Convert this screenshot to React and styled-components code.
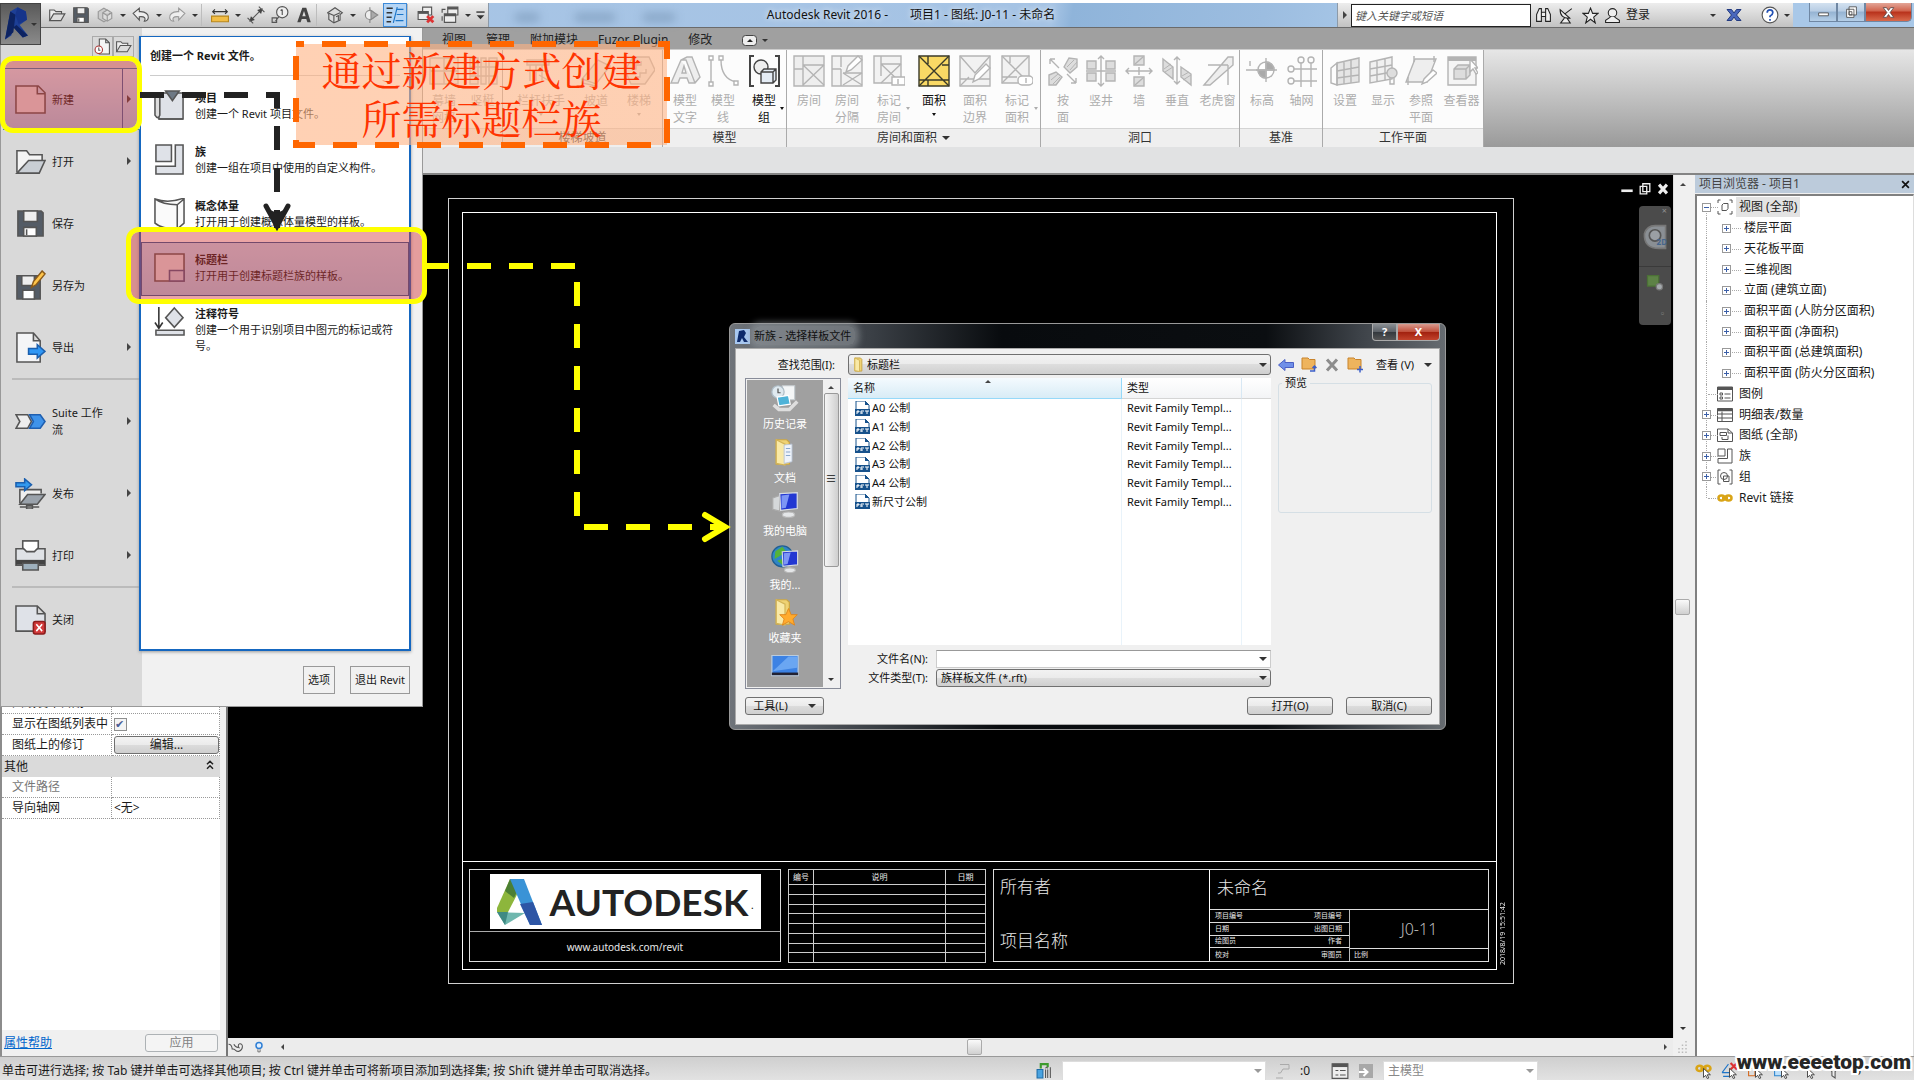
import styled, { createGlobalStyle, css } from "styled-components";

const GlobalStyle = createGlobalStyle`
*{box-sizing:border-box;}
body{margin:0;background:#fff;color:#1a1a1a;
font:12px/16px "Noto Sans","Noto Sans CJK SC",sans-serif;}
button,input,select{font:inherit;color:inherit;margin:0;}
button{padding:0;border:0;background:none;}
svg{display:block;flex:none;}
`;

/* ---------- shell ---------- */

const Shell = styled.div`
position:relative;height:100vh;padding:3px 6px 0 0;overflow:hidden;
display:flex;flex-direction:column;`;

const TitleBar = styled.header`
display:flex;height:25px;flex:none;border-bottom:1px solid #6b6b6b;
background:linear-gradient(100deg,#a9c6e6 0%,#a5c3e4 55%,#8fb4da 56%,#9cbde0 66%,#a9c8e8 72%);`;

const QuickBar = styled.div`
display:flex;align-items:center;padding-left:45px;width:489px;flex:none;
background:linear-gradient(#f0f0f0,#c4c4c4);border-right:1px solid #8d9aa8;`;

const QuickButton = styled.button`
display:flex;align-items:center;justify-content:center;height:24px;
width:${p => p.$slim ? 12 : 24}px;
${p => p.$on && css`background:#b5d5f5;border:1px solid #3c8ad8;`}`;

const QuickSeparator = styled.i`width:7px;height:22px;border-left:1px solid #bdbdbd;`;

const WindowTitle = styled.div`
flex:1;display:flex;align-items:center;justify-content:center;gap:22px;position:relative;
padding-right:4px;white-space:nowrap;color:#111;text-shadow:0 0 6px #fff;`;

const Haze = styled.i`
position:absolute;top:10px;left:${p => p.$left}px;width:${p => p.$width}px;height:9px;
background:#6a88a8;opacity:.5;filter:blur(5px);`;

const InfoCenter = styled.div`
display:flex;align-items:center;width:456px;flex:none;
background:linear-gradient(#ededed,#c2c2c2);border-left:1px solid #8d9aa8;`;

const SearchBox = styled.input`
width:180px;height:23px;border:1px solid #222;background:#fff;padding:0 3px;font-size:11px;font-style:italic;
&::placeholder{color:#555;opacity:1;}`;

const InfoButton = styled.button`
width:${p => p.$width || 24}px;height:23px;display:flex;align-items:center;gap:5px;white-space:nowrap;
justify-content:${p => p.$align || "center"};padding:0 2px;`;

const WindowButtons = styled.div`display:flex;padding:0 2px 0 16px;width:121px;flex:none;align-items:flex-start;`;

const WindowButton = styled.button`
height:19px;width:${p => p.$close ? 47 : 28}px;display:flex;align-items:center;justify-content:center;
border:1px solid #6f87a3;border-top:0;border-radius:0 0 ${p => p.$close ? "5px 0" : "0 0"};
background:${p => p.$close ? "linear-gradient(#e3a597,#d0624b 45%,#b8311b 50%,#d96a4c)" : "linear-gradient(#d3e1f0,#b8cde4 45%,#95b3d2 50%,#b5cfe8)"};`;

const AppButton = styled.button`
position:absolute;left:0;top:3px;width:41px;height:42px;z-index:4;display:flex;align-items:center;gap:2px;
padding-left:3px;border:1px solid #444;background:linear-gradient(#5a5a5a,#8a8a8a);`;

const Tabs = styled.nav`
display:flex;align-items:center;gap:20px;height:21px;flex:none;padding:3px 0 0 442px;background:#a0a0a0;`;

const Tab = styled.button`color:#222;white-space:nowrap;`;

const TabToggle = styled.button`display:flex;align-items:center;gap:5px;margin-left:10px;`;

const Ribbon = styled.div`
display:flex;height:98px;flex:none;padding-left:422px;
border-top:1px solid #ccc;background:linear-gradient(#e6e6e6,#9a9a9a);`;

const RibbonPanel = styled.section`
display:flex;flex-direction:column;flex:none;background:#fcfcfc;border-right:1px solid #aaa;`;

const RibbonButtons = styled.div`display:flex;flex:1;padding:5px 0 0 3px;`;

const RibbonButton = styled.button`
position:relative;display:flex;flex-direction:column;align-items:center;width:${p => p.$width}px;
line-height:17px;white-space:pre;color:${p => p.$on ? "#111" : "#adadad"};
svg{margin-bottom:5px;}`;

const ButtonArrow = styled.i`
${p => p.$side ? css`position:absolute;right:2px;top:52px;` : css`margin-top:4px;`}
border:2px solid transparent;border-top:3px solid currentColor;border-bottom:0;`;

const PanelLabel = styled.div`
height:19px;line-height:18px;background:#efefef;border-top:1px solid #d4d4d4;color:#333;white-space:nowrap;
display:flex;align-items:center;justify-content:center;gap:5px;`;

const OptionsBar = styled.div`height:28px;flex:none;background:#e1e2e3;border-bottom:2px solid #848484;`;

const Workspace = styled.main`display:flex;flex:1;min-height:0;background:#f0f0f0;`;

/* ---------- properties ---------- */

const Properties = styled.aside`
width:220px;flex:none;display:flex;flex-direction:column;border-left:2px solid #8c8c8c;background:#fff;margin-right:6px;`;

const TypeSelector = styled.div`height:518px;flex:none;background:#f0f0f0;`;

const PropertyTable = styled.table`
border-collapse:separate;border-spacing:0;table-layout:fixed;width:100%;
td,th{height:21px;padding:0 0 0 3px;font-weight:400;text-align:left;border-bottom:1px dotted #999;border-right:1px dotted #999;white-space:nowrap;}
th:first-child{padding-left:10px;width:110px;}
td{padding-left:2px;}
tr.muted{color:#777;}
tr.group th{padding-left:2px;background:#dadada;border:0;}
label{cursor:default;}`;

const GroupRow = styled.div`display:flex;justify-content:space-between;padding-right:4px;`;

const Tick = styled.input`
appearance:none;display:block;width:13px;height:13px;border:1px solid #8e8f8f;background:#f4f4f4;
&:checked::after{content:"✔";display:block;font:bold 11px/11px "DejaVu Sans",sans-serif;color:#4a5f97;}`;

const RaisedButton = styled.button`
display:flex;align-items:center;justify-content:center;
height:18px;width:${p => p.$width ? p.$width + "px" : "100%"};
border:1px solid #707070;border-radius:3px;background:linear-gradient(#f4f4f4,#ebebeb 48%,#dcdcdc 50%,#cfcfcf);
&:disabled{color:#838383;background:#f4f4f4;border-color:#adb2b5;}`;

const PropertiesFooter = styled.footer`
margin-top:auto;height:26px;display:flex;align-items:center;justify-content:space-between;padding:0 2px;background:#f0f0f0;
a{color:#0066cc;}`;

/* ---------- drawing area ---------- */

const View = styled.section`
flex:1;min-width:0;display:grid;grid-template:minmax(0,1fr) 18px / minmax(0,1fr) 18px;border-left:2px solid #777;`;

const Canvas = styled.div`
position:relative;background:#000;padding:23px 159px 54px 220px;display:flex;`;

const Sheet = styled.div`flex:1;display:flex;border:1px solid #d0d0d0;padding:13px 0 13px 13px;color:#e8e8e8;`;

const SheetFrame = styled.div`flex:1;display:flex;flex-direction:column;border:1px solid #fff;min-width:0;`;

const TitleBlock = styled.div`
margin-top:auto;height:108px;border-top:1px solid #fff;padding:7px 7px 7px 6px;display:flex;gap:7px;`;

const LogoCell = styled.div`width:312px;flex:none;border:1px solid #ddd;display:flex;flex-direction:column;align-items:center;`;

const LogoPlate = styled.div`
width:271px;height:55px;margin-top:4px;background:#fff;color:#222;display:flex;align-items:center;gap:8px;padding-left:7px;
font:bold 37px/46px Lato,sans-serif;small{font-size:9px;align-self:flex-end;margin-left:-5px;}`;

const LogoLink = styled.div`align-self:stretch;flex:1;margin-top:2px;border-top:1px solid #aaa;display:flex;align-items:center;justify-content:center;font-size:10px;`;

const RevisionTable = styled.table`
width:198px;height:94px;flex:none;border-collapse:collapse;font-size:8px;line-height:8px;
td,th{border:1px solid #ccc;padding:0;font-weight:400;}`;

const InfoCell = styled.div`flex:1;display:flex;border:1px solid #ddd;`;

const OwnerCell = styled.div`
width:216px;flex:none;border-right:1px solid #fff;padding:5px 6px 8px;display:flex;flex-direction:column;justify-content:space-between;
font-size:17px;line-height:24px;font-weight:300;`;

const SheetInfo = styled.div`flex:1;display:flex;flex-direction:column;`;

const SheetName = styled.div`height:41px;padding:6px 7px;font-size:17px;line-height:24px;font-weight:300;border-bottom:1px solid #ddd;`;

const SheetMeta = styled.div`flex:1;display:grid;grid-template-columns:140px 1fr;grid-template-rows:39px 1fr;`;

const MetaList = styled.dl`
grid-row:1 / 3;margin:0;border-right:1px solid #bbb;display:grid;grid-template-rows:repeat(4,1fr);font-size:7px;line-height:8px;
div{display:flex;justify-content:space-between;align-items:center;padding:0 7px 0 5px;border-bottom:1px solid #ddd;}
div:last-child{border-bottom:0;}
dd{margin:0;}`;

const SheetNumber = styled.div`display:flex;align-items:center;justify-content:center;font-size:16px;font-weight:300;border-bottom:1px solid #ddd;color:#bbb;`;

const ScaleCell = styled.div`font-size:7px;line-height:12px;padding-left:4px;`;

const PlotStamp = styled.div`
width:16px;flex:none;writing-mode:vertical-rl;transform:rotate(180deg);font-size:7px;line-height:12px;
padding:0 0 0 4px;margin-bottom:5px;text-align:left;white-space:nowrap;`;

const MdiButtons = styled.div`position:absolute;right:3px;top:7px;display:flex;gap:4px;`;

const NavBar = styled.div`
position:absolute;right:2px;top:31px;width:32px;height:119px;border-radius:4px;background:#4b4b4b;
display:flex;flex-direction:column;align-items:center;color:#8f8f8f;`;

const NavIcon = styled.button`
position:relative;height:50px;width:100%;padding-top:8px;display:flex;justify-content:center;
&+&{border-top:1px solid #3a3a3a;padding-top:6px;height:37px;}
small{position:absolute;right:4px;top:21px;font-size:8px;line-height:10px;font-weight:bold;color:#45658c;}`;

const NavMark = styled.span`align-self:flex-end;padding:0 4px;font-size:9px;line-height:${p => p.$tall ? 22 : 10}px;`;

const ScrollV = styled.div`
display:flex;flex-direction:column;align-items:center;justify-content:space-between;padding:8px 0;background:#f0f0f0;border-left:1px solid #e0e0e0;`;

const ScrollH = styled.div`
display:flex;align-items:center;justify-content:space-between;padding:0 6px 0 0;background:#ececec;`;

const ViewControls = styled.div`display:flex;align-items:center;gap:8px;i{margin-left:8px;}`;

const Thumb = styled.i`width:15px;height:16px;border:1px solid #aaa;border-radius:2px;background:linear-gradient(#fafafa,#d0d0d0);`;

const Caret = styled.i`
flex:none;border:${p => p.$size || 4}px solid transparent;
${p => p.$dir === "up" && css`border-bottom-color:#444;border-top-width:0;`}
${p => p.$dir === "left" && css`border-right-color:#444;border-left-width:0;`}
${p => p.$dir === "right" && css`border-left-color:#444;border-right-width:0;`}
${p => !p.$dir && css`border-top-color:#333;border-bottom-width:0;`}`;

/* ---------- project browser ---------- */

const Browser = styled.aside`width:219px;margin-left:4px;flex:none;display:flex;flex-direction:column;`;

const BrowserTitle = styled.div`
height:18px;display:flex;align-items:center;justify-content:space-between;padding:0 4px;margin-bottom:1px;background:#bccbdb;color:#444;`;

const Tree = styled.div`
flex:1;border:1px solid #808080;border-width:2px 1px 0 2px;background:#fff;border-right-color:#ddd;`;

const TreeRows = styled.ul`list-style:none;margin:0;padding:1px 0 0 3px;height:312px;display:grid;grid-auto-rows:1fr;`;

const TreeRow = styled.li`
position:relative;display:flex;align-items:center;padding-left:${p => p.$child ? 22 : 2}px;white-space:nowrap;
&::before{content:"";position:absolute;left:6px;top:${p => p.$first ? 50 : 0}%;bottom:${p => p.$last ? 50 : 0}%;border-left:1px dotted #aaa;}
&::after{content:"";position:absolute;top:50%;left:${p => p.$child ? 32 : 8}px;width:${p => p.$child ? 9 : 10}px;border-top:1px dotted #aaa;}`;

const Expander = styled.button`
position:relative;z-index:1;width:9px;height:9px;border:1px solid #999;background:#fff;display:grid;place-items:center;
margin-right:${p => p.$child ? 10 : 6}px;visibility:${p => p.$empty ? "hidden" : "visible"};`;

const TreeLabel = styled.span`padding:0 3px;margin-left:${p => p.$child ? 0 : 3}px;line-height:20px;background:${p => p.$on ? "#e3e3e3" : "none"};`;

/* ---------- status bar ---------- */

const StatusBar = styled.footer`
display:flex;align-items:center;height:24px;flex:none;padding:4px 0 0 2px;
border-top:1px solid #999;background:linear-gradient(#cfcfcf,#e2e2e2);white-space:nowrap;`;

const StatusText = styled.span`flex:1;`;
const StatusTools = styled.div`display:flex;align-items:center;gap:9px;width:659px;`;
const FilterCount = styled.span`margin-right:12px;`;
const SelectTools = styled.div`display:flex;align-items:center;gap:9px;width:219px;`;

const PickWrap = styled.span`
position:relative;display:block;width:${p => p.$width ? p.$width + "px" : "100%"};
>i{position:absolute;right:4px;top:50%;margin-top:-2px;pointer-events:none;
${p => p.$muted && css`border-top-color:#999;`}}`;

const Pick = styled.select`
appearance:none;display:block;width:100%;height:${p => p.$height || 20}px;border-radius:0;padding:0 4px;
border:1px solid ${p => p.$plain ? "#ddd" : "#707070"};color:${p => p.$plain ? "#888" : "#111"};
background:${p => p.$plain ? "#fff" : "linear-gradient(#f2f2f2,#ebebeb 48%,#dddddd 50%,#cfcfcf)"};
${p => !p.$plain && css`border-radius:3px;`}
${p => p.$inset && css`padding-left:${p.$inset}px;`}`;

const Watermark = styled.div`
position:absolute;right:9px;bottom:6px;z-index:6;color:#262626;
font:900 21px/24px Roboto,"Liberation Sans",sans-serif;
text-shadow:2px 0 #fff,-2px 0 #fff,0 2px #fff,0 -2px #fff,2px 2px #fff,-2px -2px #fff,2px -2px #fff,-2px 2px #fff;`;

/* ---------- application menu ---------- */

const AppMenu = styled.div`
position:absolute;left:0;top:28px;z-index:3;width:423px;height:679px;display:flex;font-size:11px;
background:#f1f1f1;border:1px solid #999;border-top:0;`;

const MenuLeft = styled.div`width:141px;flex:none;background:#d9d9d9;display:flex;flex-direction:column;`;

const RecentButtons = styled.div`
display:flex;justify-content:flex-end;height:33px;padding:8px 8px 4px;margin-bottom:7px;
button{width:21px;border:1px solid #aaa;display:grid;place-items:center;}`;

const MenuItem = styled.button`
position:relative;display:flex;align-items:center;height:${p => p.$tall ? 82 : 62}px;padding:0 11px 0 14px;gap:6px;text-align:left;
${p => p.$on && css`margin:0 2px;padding:0 9px 0 12px;border:1px solid #3c7fb5;border-width:1px 0;background:linear-gradient(#d6e8f8,#a8cdec);
&::after{content:"";position:absolute;right:17px;top:0;bottom:0;border-left:1px solid #3c66a5;}`}
span{flex:1;white-space:pre;line-height:17px;}`;

const MenuRule = styled.hr`width:127px;height:2px;margin:0 0 0 11px;border:0;background:#bbb;flex:none;`;

const MenuRight = styled.div`flex:1;display:flex;flex-direction:column;padding:8px 11px 12px 0;margin-left:-3px;`;

const NewPanel = styled.div`
height:616px;background:#fff;border:1px solid #1567c0;border-width:1px 2px 2px;box-shadow:0 1px 3px #999;
h2{margin:0 9px;padding:10px 0;font-size:11px;line-height:18px;border-bottom:1px solid #ccc;}`;

const NewItem = styled.button`
display:flex;width:100%;height:54px;padding:${p => p.$on ? 9 : 10}px 6px 0 ${p => p.$on ? 12 : 13}px;gap:10px;text-align:left;
${p => p.$on && css`border:1px solid #2a5c9a;background:linear-gradient(#c5ddf4,#aecdea);`}
p{margin:0;line-height:16px;}
b{display:block;line-height:16px;}`;

const NewItems = styled.div`padding-top:4px;`;

const MenuFooter = styled.div`
display:flex;justify-content:flex-end;gap:15px;margin:15px 1px 0 0;
button{height:28px;padding:0 4px;border:1px solid #999;background:#f1f1f1;font-size:11px;}`;

/* ---------- annotations drawn over the windows ---------- */

const Highlight = styled.div`
position:absolute;z-index:5;left:${p => p.$x}px;top:${p => p.$y}px;width:${p => p.$w}px;height:${p => p.$h}px;
border:5px solid #ff0;border-radius:13px;background:rgba(212,50,50,.44);background-clip:padding-box;pointer-events:none;`;

const Arrows = styled.svg`position:absolute;left:0;top:0;z-index:5;pointer-events:none;`;

const Callout = styled.div`
position:absolute;z-index:5;left:293px;top:41px;width:377px;height:107px;padding:4px 0;text-align:center;
color:#ff3300;font:400 40px/48px "Noto Serif CJK SC","Noto Sans CJK SC",serif;
background:linear-gradient(rgba(255,178,130,.6),rgba(255,178,130,.6)) 3px 3px / 371px 101px no-repeat;
svg{position:absolute;left:0;top:0;}`;

/* ---------- file dialog ---------- */

const Dialog = styled.section`
position:absolute;z-index:2;left:729px;top:323px;width:717px;display:flex;flex-direction:column;padding:0 5px 4px;
border:1px solid #999;border-radius:6px;font-size:11px;color:#111;
background:linear-gradient(90deg,#6f747a,#3a3f45 20%,#080b0e 38%,#0b0e11 75%,#3d4248 88%,#666b70);`;

const DialogTitle = styled.div`
display:flex;align-items:center;height:24px;gap:4px;
strong{flex:1;font-weight:400;}
strong span{padding:2px 4px 2px 0;border-radius:6px;background:rgba(150,154,160,.55);box-shadow:0 0 6px 4px rgba(150,154,160,.55);}`;

const DialogButtons = styled.div`display:flex;align-self:flex-start;`;

const DialogButton = styled.button`
height:17px;width:${p => p.$close ? 43 : 25}px;border:1px solid #aaa;border-top:0;color:#fff;font-weight:bold;line-height:14px;
border-radius:${p => p.$close ? "0 0 4px 0" : "0 0 0 4px"};
background:${p => p.$close ? "linear-gradient(#d99a8e,#c0503c 48%,#a1200e 50%,#c2432c)" : "linear-gradient(#8a8f94,#5c6167 48%,#33383d 50%,#555)"};`;

const DialogBody = styled.div`
display:grid;grid-template-columns:96px 423px 1fr;column-gap:7px;row-gap:3px;padding:5px 8px 9px 9px;
border:1px solid #aaa;background:#f0f0f0;`;

const LookLabel = styled.label`align-self:center;text-align:right;padding-right:6px;white-space:nowrap;`;

const FolderPick = styled.div`position:relative;svg{position:absolute;left:4px;top:3px;z-index:1;}`;

const DialogTools = styled.div`
display:flex;align-items:center;gap:7px;
button{display:flex;align-items:center;gap:10px;white-space:nowrap;}
button:last-child{margin-left:6px;}`;

const Places = styled.div`display:flex;height:311px;border:1px solid #888c99;padding:1px;background:#f0f0f0;`;

const PlaceList = styled.div`flex:1;background:#a0a0a0;overflow:hidden;padding-top:2px;`;

const Place = styled.button`
display:flex;flex-direction:column;align-items:center;width:100%;height:54px;padding-top:2px;gap:4px;color:#fff;
&:nth-child(even){height:53px;}`;

const PlaceScroll = styled.div`
width:16px;display:flex;flex-direction:column;align-items:center;justify-content:space-between;padding:6px 0;
&::before{content:"≡";order:1;height:172px;width:13px;border:1px solid #999;border-radius:2px;text-align:center;line-height:170px;
background:linear-gradient(90deg,#f5f5f5,#cfcfcf);margin-bottom:108px;}
i:last-child{order:2;}`;

const FilePane = styled.div`display:flex;flex-direction:column;`;

const FileTable = styled.table`
width:100%;border-collapse:separate;border-spacing:0;background:#fff;height:133px;
th{height:21px;padding:0 5px;text-align:left;font-weight:400;border-right:1px solid #d8e8f4;border-bottom:1px solid #d5d5d5;background:linear-gradient(#fff,#f3f4f6);}
th:first-child{width:274px;background:linear-gradient(#f4fafe,#d8ecf6);border-color:#96d9f9;position:relative;}
th:nth-child(2){width:120px;}
td{padding:0 5px;border-right:1px solid #e9f3fa;}
td:first-child{padding-left:7px;}
th:last-child,td:last-child{border-right:0;}
th i{position:absolute;left:50%;top:2px;}`;

const FileFill = styled.div`
height:134px;background:#fff;display:grid;grid-template-columns:274px 120px 1fr;
i{border-right:1px solid #e9f3fa;}`;

const FileName = styled.span`display:flex;align-items:center;gap:2px;line-height:18px;`;

const FieldRow = styled.div`
display:grid;grid-template-columns:88px 1fr;align-items:center;margin-top:${p => p.$first ? 5 : 1}px;
label{text-align:right;padding-right:8px;}`;

const NameInput = styled.input`display:block;width:100%;height:18px;border:1px solid #ccc;background:#fff;border-top-color:#999;padding:0 4px;`;

const Preview = styled.fieldset`
margin:-3px 0 0;height:138px;border:1px solid #d5dfe5;border-radius:3px;padding:0;
legend{margin-left:3px;padding:0 3px;line-height:16px;}`;

const DialogFooter = styled.div`grid-column:1 / 4;display:flex;gap:13px;padding-top:5px;button:first-child{margin-right:auto;}`;

const ToolsGap = styled.i`width:20px;`;

/* ---------- icons ---------- */

const Icon = ({ size = 16, children, ...rest }) => (
  <svg width={size} height={size} viewBox="0 0 32 32" fill="none" stroke="#555" strokeWidth="2" {...rest}>{children}</svg>
);

const quickIcons = {
  open: <><path d="M3 26V7h8l3 3h10v5" fill="#eee" /><path d="M3 26l7-12h20l-7 12z" fill="#ddd" /></>,
  save: <><path d="M3 3h24l2 2v24H3z" fill="#545c66" /><path d="M9 3h14v11H9z" fill="#eee" /><path d="M9 20h13v9H9z" fill="#fff" /><path d="M12 22v6" /></>,
  sync: <><path d="M4 10l10-6 10 6v12l-10 6-10-6z" stroke="#999" fill="#ccc" /><path d="M12 12l8-5 8 5v10l-8 5-8-5zM12 12l8 5 8-5M20 17v10" stroke="#999" fill="#ddd" /></>,
  undo: <path d="M2 13L13 4v6c12-1 17 6 16 11-1 4-4 6-7 6 3-5 1-9-9-8v6z" fill="#eee" />,
  redo: <path d="M30 13L19 4v6C7 9 2 16 3 21c1 4 4 6 7 6-3-5-1-9 9-8v6z" fill="#eee" stroke="#999" />,
  dim: <><path d="M3 10h26M7 6l-4 4 4 4M25 6l4 4-4 4" stroke="#333" /><path d="M1 18h30v10H1z" fill="#f2bd45" stroke="#b8871c" /></>,
  measure: <><path d="M6 26L26 6" /><path d="M28 4l-3 10-7-7zM4 28l3-10 7 7z" fill="#444" stroke="none" /><path d="M1 21l10 10M21 1l10 10" /></>,
  tag: <><circle cx="20" cy="11" r="10" fill="#eee" /><path d="M20 6v10M17 8l3-2M14 19L8 27M2 21h8v8H2z" /></>,
  text: <path d="M4 29L13 3h7l8 26h-6l-2-6h-8l-2 6zM13 18h6l-3-9z" fill="#444" stroke="none" fillRule="evenodd" />,
  house: <><path d="M3 12l13-9 13 9-4 3v10l-11 5-9-6V15z" fill="#ddd" /><path d="M14 17l11-5M14 17v13M5 13l9 4M18 19l4-2v8" /></>,
  section: <><circle cx="14" cy="16" r="8" fill="#eee" stroke="#888" /><path d="M14 8V2M14 30v-6M16 8l12 8-12 8z" stroke="#888" fill="#aaa" /></>,
  thin: <><path d="M1 4h11M1 12h10M1 20h9M1 28h8" stroke="#333" strokeWidth="3" /><path d="M20 2l-7 28M20 6h11M19 15h12M17 26h14" stroke="#1b75c8" /></>,
  closeWin: <><path d="M10 2h16v14H10z" fill="#eee" /><path d="M2 10h18v14H2z" fill="#eee" /><path d="M2 12h18" strokeWidth="4" /><path d="M18 18l11 11M29 18L18 29" stroke="#d33" strokeWidth="5" /></>,
  switchWin: <><path d="M12 2h18v14H12zM6 14h20v15H6z" fill="#eee" /><path d="M12 4h18M6 16h20" strokeWidth="4" /><path d="M2 12V6h6M2 18v8" /></>,
};

const Q = ({ name, label, on }) => (
  <QuickButton aria-label={label} $on={on}><Icon size={18}>{quickIcons[name]}</Icon></QuickButton>
);
const QArrow = () => <QuickButton $slim aria-label="更多"><Caret $size={3} /></QuickButton>;

const ribbonIcons = {
  grid: <path d="M2 3h28v26H2zM16 3v26M2 16h28" fill="#eee" />,
  mullion: <path d="M3 3h8v26H3zM14 3h5v26h-5zM22 3h8v26h-8zM3 12h26M3 21h26" fill="#eee" />,
  rail: <><path d="M2 5h22v5H2zM2 16h22" fill="#ddd" /><path d="M5 10v16M11 10v16M17 10v16M14 20l14 8" /></>,
  ramp: <path d="M2 24L18 5l12 6-14 18zM2 24v4l14 3" fill="#eee" />,
  stair: <path d="M10 2h16l6 13-10 14H8L2 15zM8 14h5v-4h5V6M12 22h5v-4h6v-4" fill="#eee" />,
  letter: <path d="M2 28L12 5l6-3h5l8 20-5 6h-6l-2-5H11l-2 5zM13 18h4l-2-7zM12 5h5l9 23" fill="#eee" fillRule="evenodd" />,
  curve: <><path d="M4 5v22M14 5c0 14 6 20 15 22" /><path d="M2 1h4v4H2zM2 27h4v4H2zM12 1h4v4h-4zM27 26h4v4h-4z" fill="#fff" /></>,
  group: <><path d="M6 1H2v30h4M27 1h4v30h-4" strokeWidth="2" /><circle cx="13" cy="12" r="7" fill="#eee" /><path d="M13 17l3-3h12v11l-3 3H13zM13 17h12v11M25 17l3-3" fill="#e4ecf5" /></>,
  room: <><path d="M1 1h30v30H1z" fill="#eee" /><path d="M10 1v21M1 14h9M10 10h21M10 10l21 20M31 10L10 30M10 22v9" /></>,
  separator: <><path d="M1 1h30v30H1z" fill="#f2f2f2" /><path d="M10 1v11M1 14h9M12 18h19M12 30l19-12M12 18l19 12M10 14v17" /><path d="M15 17l2-6L27 1l4 4-11 10z" fill="#fff" /></>,
  tagRoom: <><path d="M1 1h27v27H1z" fill="#f2f2f2" /><path d="M8 1v20M8 9h20M8 9l20 19M28 9L8 28" /><path d="M19 22h13v8H19z" fill="#fff" /><path d="M25 24v5" /></>,
  area: <><path d="M1 1h30v30H1z" fill="#f9d965" stroke="#3a3a2a" /><path d="M1 1l30 30M31 1L1 31M10 1v8M10 25v6M1 25h30M24 10h7" stroke="#3a3a2a" strokeWidth="1.4" /></>,
  bound: <><path d="M1 1h30v30H1z" fill="#f2f2f2" /><path d="M1 1l15 17L31 1M1 31l9-9M1 24h30" /><path d="M14 27l2-7L27 9l4 4-11 11z" fill="#fff" /></>,
  tagArea: <><path d="M1 1h27v27H1z" fill="#f2f2f2" /><path d="M1 1l27 27M28 1L1 28M9 1v7M1 22h15" /><rect x="17" y="21" width="15" height="9" rx="4" fill="#fff" /><path d="M25 23v5" /></>,
  face: <><path d="M3 4l9 9M3 4h5M3 4v5M29 28l-9-9M29 28h-5M29 28v-5" /><path d="M17 12l5-9 8 1v8l-7 6zM2 20l7-3 6 5-6 8H2z" fill="#ddd" /><path d="M20 12l7-7M23 15l7-8M4 25l7-6M6 29l7-7" strokeWidth="1" /></>,
  shaft: <><path d="M2 6h9v8H2zM21 6h9v8h-9zM2 18h9v8H2zM21 18h9v8h-9z" fill="#ddd" /><path d="M16 1v30M1 16h30M13 4l3-3 3 3M13 28l3 3 3-3" /></>,
  wall: <><path d="M11 1h10v9H11zM11 22h10v9H11z" fill="#ddd" /><path d="M12 9l8-7M12 30l8-7M3 16h26M6 13l-3 3 3 3M26 13l3 3-3 3M16 12v8" /></>,
  vertical: <><path d="M2 4l10 8v12L2 16zM20 12l10 7v11l-10-8z" fill="#ddd" /><path d="M3 14l7-5M4 17l8-5M21 21l7-4M22 25l8-5" strokeWidth="1" /><path d="M16 2v27M13 5l3-3 3 3M13 26l3 3 3-3" /></>,
  dormer: <path d="M2 30L26 2h5v8L8 30zM6 10h20M26 10v20" fill="#eee" />,
  level: <><path d="M0 15h11M4 6v5" /><circle cx="20" cy="15" r="8" fill="#fff" /><path d="M20 7v8h8a8 8 0 0 0-8-8zM20 23v-8h-8a8 8 0 0 0 8 8z" fill="#aaa" /><path d="M20 3v24M10 15h21" /></>,
  axis: <><path d="M15 8v24M25 8v24M8 14h23M8 26h23" /><circle cx="15" cy="5" r="3" /><circle cx="25" cy="5" r="3" /><circle cx="5" cy="14" r="3" /><circle cx="5" cy="26" r="3" /></>,
  planeSet: <><path d="M8 8l22-5v24L8 30zM8 16l22-4M8 23l22-3M15 7v22M22 5v23" fill="#e5e5e5" /><path d="M2 13l6-5v22l-6-2z" /></>,
  planeShow: <><path d="M3 7l22-5v22L3 28zM3 14l22-4M3 21l22-4M10 6v20M18 4v21" fill="#f0f0f0" /><circle cx="25" cy="18" r="5" fill="#ddd" /><path d="M23 23v6h4v-6" /></>,
  refPlane: <><path d="M10 4h21L22 27H1z" fill="#eee" /><path d="M9 1v6M29 1v6M3 22v8" /><path d="M17 29l2-5 9-9 4 3-10 9z" fill="#fff" /></>,
  viewer: <><path d="M2 2h28v28H2z" fill="#f5f5f5" /><path d="M2 4h28" strokeWidth="4" /><path d="M8 14l4-4h12v10l-4 4H8zM8 14h12v10M20 14l4-4" fill="#ddd" /><path d="M24 4v13l3-3 3 5 2-1-3-5h3z" fill="#fff" /></>,
};

const panels = [
  { label: "", buttons: [["grid", "幕墙\n网格", 38], ["mullion", "竖梃", 39]] },
  { label: "楼梯坡道", buttons: [["rail", "栏杆扶手", 70, "down"], ["ramp", "坡道", 40], ["stair", "楼梯", 46, "down"]] },
  { label: "模型", buttons: [["letter", "模型\n文字", 38], ["curve", "模型\n线", 38], ["group", "模型\n组", 44, "side", true]] },
  { label: "房间和面积", more: true, buttons: [["room", "房间", 38], ["separator", "房间\n分隔", 38], ["tagRoom", "标记\n房间", 46, "side"], ["area", "面积", 44, "down", true], ["bound", "面积\n边界", 38], ["tagArea", "标记\n面积", 46, "side"]] },
  { label: "洞口", buttons: [["face", "按\n面", 38], ["shaft", "竖井", 38], ["wall", "墙", 38], ["vertical", "垂直", 38], ["dormer", "老虎窗", 43]] },
  { label: "基准", buttons: [["level", "标高", 38], ["axis", "轴网", 41]] },
  { label: "工作平面", buttons: [["planeSet", "设置", 38], ["planeShow", "显示", 38], ["refPlane", "参照\n平面", 38], ["viewer", "查看器", 43]] },
];

const shade = "#dfe2e8";
const menuIcons = {
  new: <path d="M1 2h23l7 7v21H1zM23 2v8h8" fill={shade} />,
  open: <><path d="M2 27V5h10l3 4h13v8" fill="#f4f4f4" /><path d="M2 28l12-13h17l-6 13z" fill="#c9ced4" /></>,
  save: quickIcons.save,
  saveAs: <><path d="M2 6h24v24H2z" fill="#545c66" /><path d="M7 6h13v10H7z" fill="#eee" /><path d="M8 21h12v9H8z" fill="#fff" /><path d="M17 18l2-6L28 1l3 3-9 11z" fill="#ffc54a" stroke="#8a5a1a" strokeWidth="1.5" /></>,
  export: <><path d="M2 1h17l7 8v22H2zM19 1v8h7" fill="#f4f5f7" /><path d="M14 17h9v-4l8 7-8 7v-4h-9z" fill="#2f97f5" stroke="#1b5fae" /></>,
  suite: <><path d="M1 9h12l4 7-4 7H1l4-7z" fill="#eee" /><path d="M15 9h11l5 7-5 7H15l4-7z" fill="#3f93ea" stroke="#1f5fb0" /></>,
  publish: <><path d="M5 26V12h22v4" fill="#eee" /><path d="M5 27l8-10h18l-8 10z" fill="#9aa2ab" /><path d="M1 5h9V1l7 6-7 6V9H1z" fill="#3299ee" stroke="#1b5fae" /><path d="M5 30h20M12 28h6v4h-6z" /></>,
  print: <><path d="M8 1h16v11H8z" fill="#fff" /><path d="M1 9h30v17H1z" fill="#dfe2e6" /><path d="M8 1v7l4 4h8l4-4V1z" fill="#fff" /><path d="M1 23h30" stroke="#444" strokeWidth="5" /><path d="M8 24h16v7H8z" fill="#9eb0bd" /></>,
  close: <><path d="M1 2h22l8 8v18H1zM23 2v8h8" fill={shade} /><rect x="19" y="18" width="12" height="13" rx="2" fill="#d23a3a" stroke="#8c1c1c" /><path d="M22 21l6 7M28 21l-6 7" stroke="#fff" /></>,
  project: <><path d="M5 3h25v27H5z" fill={shade} /><path d="M1 26V7q3-4 5 0v19q-2 5-5 0zM5 30h25" fill="#ddd" /><path d="M12 1h14l-7 10z" fill="#6d7884" /></>,
  family: <path d="M2 1h16v17H2zM22 1h8v30H2v-8h20z" fill={shade} />,
  mass: <path d="M1 1q14 5 30-1v26l-7 6Q8 32 1 26zM24 7v25M24 7l7-6M1 1q8 6 23 6" fill="#fafafa" />,
  title: <><path d="M1 2h30v28H1z" fill={shade} /><path d="M16 19h15v11H16z" fill="#c8d2e4" stroke="#4a5a88" /></>,
  symbol: <><path d="M5 1v21M1 17l4 6 4-6" stroke="#333" /><path d="M21 2l9 10-9 10-9-10zM2 25h29v5H2z" fill={shade} /></>,
};

const treeIcons = {
  views: <><path d="M7 2H2v6M25 2h5v6M7 30H2v-6M25 30h5v-6" /><path d="M10 12l3-3h9v10l-3 4h-9z" /></>,
  legend: <><path d="M1 2h30v28H1z" fill="#fff" /><path d="M1 5h30" strokeWidth="6" /><path d="M6 14h5v4H6zM6 22h5v4H6zM15 16h12M15 24h12" /></>,
  schedule: <><path d="M1 3h30v26H1z" fill="#fff" /><path d="M1 6h30" strokeWidth="5" /><path d="M1 14h30M1 22h30M10 9v19" /></>,
  sheets: <path d="M1 4h21l9 8v17H1zM22 4v8h9M6 11h13v6H6zM22 17v8H10v-5" fill="#fff" />,
  family: <path d="M2 2h14v14H2zM21 2h9v28H2v-9h19z" fill="#fff" />,
  groups: <><path d="M7 2H2v28h5M25 2h5v28h-5" /><circle cx="14" cy="14" r="7" /><path d="M13 14h11v11H13z" /></>,
  link: <path d="M3 16a6 5 0 0 1 12 0 6 5 0 0 1-12 0zM17 16a6 5 0 0 1 12 0 6 5 0 0 1-12 0zM10 16h12" stroke="#d9a416" strokeWidth="5" />,
};

const tree = [
  { icon: "views", text: "视图 (全部)", open: true, on: true },
  ...["楼层平面", "天花板平面", "三维视图", "立面 (建筑立面)", "面积平面 (人防分区面积)", "面积平面 (净面积)", "面积平面 (总建筑面积)", "面积平面 (防火分区面积)"].map(text => ({ text, child: true })),
  { icon: "legend", text: "图例", empty: true },
  { icon: "schedule", text: "明细表/数量" },
  { icon: "sheets", text: "图纸 (全部)" },
  { icon: "family", text: "族" },
  { icon: "groups", text: "组" },
  { icon: "link", text: "Revit 链接", empty: true },
];

const newItems = [
  ["project", "项目", "创建一个 Revit 项目文件。"],
  ["family", "族", "创建一组在项目中使用的自定义构件。"],
  ["mass", "概念体量", "打开用于创建概念体量模型的样板。"],
  ["title", "标题栏", "打开用于创建标题栏族的样板。"],
  ["symbol", "注释符号", "创建一个用于识别项目中图元的标记或符号。"],
];

const folder = <><path d="M6 2h12l3 3v25H6z" fill="#efd273" stroke="#c9a545" /><path d="M6 2l10 5v24L6 29z" fill="#f9e9a6" stroke="#d3b458" /></>;
const screen = <><path d="M10 3l20-1v18l-19 2z" fill="#2237d2" stroke="#d9dde2" /><path d="M12 5l9-1-4 15-5 1z" fill="#7d96f5" stroke="none" /><ellipse cx="20" cy="27" rx="7" ry="3" fill="#e4e6e8" stroke="#bbb" /></>;
const places = [
  ["历史记录", <><path d="M13 2h14v16H13z" fill="#f4f6f7" stroke="#c5ccd0" /><circle cx="8" cy="9" r="7" fill="#dfe9ef" stroke="#aebcc6" /><path d="M8 5v5h3" /><path d="M7 15l13-2 2 10-13 2z" fill="#4fb3d8" stroke="#fff" /><path d="M3 24l6 5h12l9-9" stroke="#dedede" strokeWidth="4" /></>],
  ["文档", <>{folder}<path d="M15 8l9-1v20l-9 2z" fill="#eef3fa" stroke="#b9c5d6" strokeWidth="1" /><path d="M17 12h5M17 16h5M17 20h5" stroke="#8aa8cc" /></>],
  ["我的电脑", <><path d="M2 8l8-3v18l-8-2z" fill="#d5d8da" stroke="#aaa" />{screen}</>],
  ["我的...", <><circle cx="13" cy="13" r="12" fill="#2f86c8" stroke="#205f92" /><path d="M5 7l8-5 4 5-6 5-7 4z M7 18l6-2 2 8z" fill="#55b33a" stroke="none" /><g transform="translate(4 5) scale(.88)">{screen}</g></>],
  ["收藏夹", <>{folder}<path d="M20 12l3 7 7 0-5 5 2 7-7-4-7 4 2-7-5-5 7 0z" fill="#ffab2e" stroke="#e0851a" strokeWidth="1" /></>],
  ["", <><path d="M1 4h30v23H1z" fill="#3c82e4" stroke="#bcd" /><path d="M2 22L20 5h10v13z" fill="#6aa6f2" stroke="none" /><path d="M1 25h30" stroke="#223" strokeWidth="3" /></>],
];

const files = ["A0 公制", "A1 公制", "A2 公制", "A3 公制", "A4 公制", "新尺寸公制"];

const RftIcon = () => (
  <svg width="15" height="15" viewBox="0 0 15 15"><path d="M1 0h9l4 4v10H1z" fill="#fff" stroke="#17528c" /><path d="M10 0v4h4z" fill="#17528c" /><path d="M0 8h15v7H0z" fill="#17528c" /><path d="M2 13v-3h2v1H2M6 13v-3h3M6 12h2M10 10h4M12 10v3" stroke="#fff" fill="none" /></svg>
);

const RevitMark = ({ width, height }) => (
  <svg width={width} height={height} viewBox="0 0 24 32">
    <path d="M6 4L13 0l8 4 1 8-7 5 8 10-5 2-9-10-2 8-6 4z" fill="#1d3f96" />
    <path d="M6 4l5 3-2 17-8 7zM12 17l11 10-5 2-9-10z" fill="#0d2361" />
    <path d="M13 0l8 4 1 8-8 4-3-9z" fill="#16348a" />
  </svg>
);

function TitleRow() {
  return (
    <TitleBar>
      <QuickBar>
        <Q name="open" label="打开" /><Q name="save" label="保存" /><Q name="sync" label="同步" /><QArrow />
        <Q name="undo" label="放弃" /><QArrow /><Q name="redo" label="重做" /><QArrow /><QuickSeparator />
        <Q name="dim" label="测量" /><QArrow /><Q name="measure" label="对齐尺寸标注" /><Q name="tag" label="按类别标记" /><Q name="text" label="文字" /><QuickSeparator />
        <Q name="house" label="默认三维视图" /><QArrow /><Q name="section" label="剖面" /><Q name="thin" label="细线" on /><QuickSeparator />
        <Q name="closeWin" label="关闭隐藏窗口" /><Q name="switchWin" label="切换窗口" /><QArrow />
        <QuickButton $slim aria-label="自定义快速访问工具栏"><Icon size={11} stroke="#333" strokeWidth="4"><path d="M4 6h24" /><path d="M5 15h22L16 27z" fill="#333" stroke="none" /></Icon></QuickButton>
      </QuickBar>
      <WindowTitle>
        <Haze $left={26} $width={24} /><Haze $left={86} $width={40} /><Haze $left={154} $width={32} />
        <span>Autodesk Revit 2016 -</span><span>项目1 - 图纸: J0-11 - 未命名</span>
      </WindowTitle>
      <InfoCenter>
        <InfoButton $width={13} aria-label="展开"><Caret $dir="right" /></InfoButton>
        <SearchBox aria-label="搜索" placeholder="键入关键字或短语" />
        <InfoButton aria-label="查找"><Icon size={17}><path d="M3 14L8 3h4v24H3zM29 14L24 3h-4v24h9zM12 10h8v8h-8z" fill="#eee" stroke="#222" /></Icon></InfoButton>
        <InfoButton $width={23} aria-label="通讯中心"><Icon size={17}><path d="M4 5q0 17 18 16zM13 13L26 3M12 21l-7 9h18l-6-9" fill="#eee" stroke="#222" /></Icon></InfoButton>
        <InfoButton aria-label="收藏夹"><Icon size={17}><path d="M16 2l4 10h10l-8 7 3 11-9-7-9 7 3-11-8-7h10z" stroke="#222" fill="#eee" /></Icon></InfoButton>
        <InfoButton $width={62} $align="flex-start"><Icon size={17}><circle cx="16" cy="11" r="8" fill="#eee" stroke="#222" /><path d="M12 19l-9 6v4h26v-4l-9-6" fill="#eee" stroke="#222" /></Icon>登录</InfoButton>
        <InfoButton $width={54} $align="flex-end" aria-label="登录选项"><Caret $size={3} /></InfoButton>
        <InfoButton $width={26} $align="flex-end" aria-label="Exchange"><Icon size={16}><path d="M2 5h9l5 7 5-7h9l-9 11 9 11h-9l-5-7-5 7H2l9-11z" fill="#4a67bd" stroke="#223a80" /></Icon></InfoButton>
        <InfoButton $width={48} $align="flex-end" aria-label="帮助"><Icon size={18}><circle cx="16" cy="16" r="14" fill="#fff" /><path d="M11 12q0-5 5-5t5 5q0 3-5 6v2M16 23v3" stroke="#2452b5" strokeWidth="3" /></Icon><Caret $size={3} /></InfoButton>
      </InfoCenter>
      <WindowButtons>
        <WindowButton aria-label="最小化"><Icon size={13}><path d="M4 17h24v7H4z" fill="#fff" stroke="#444" /></Icon></WindowButton>
        <WindowButton aria-label="还原"><Icon size={13}><path d="M10 2h18v20H10zM4 8h18v20H4zM10 14h7v8h-7z" fill="#fff" stroke="#444" /></Icon></WindowButton>
        <WindowButton $close aria-label="关闭"><Icon size={13}><path d="M3 4h8l5 7 5-7h8l-9 12 9 12h-8l-5-7-5 7H3l9-12z" fill="#fff" stroke="#544" /></Icon></WindowButton>
      </WindowButtons>
    </TitleBar>
  );
}

function Menu() {
  const item = (icon, text, arrow = true, extra = {}) => (
    <MenuItem {...extra}>
      <Icon size={31} strokeWidth="1.6">{menuIcons[icon]}</Icon><span>{text}</span>{arrow && <Caret $dir="right" />}
    </MenuItem>
  );
  return (
    <AppMenu>
      <MenuLeft>
        <RecentButtons>
          <button aria-label="最近使用的文档"><Icon size={17}><path d="M10 2h12l7 7v21H10zM22 2v7h7" fill="#f4f4f4" /><circle cx="9" cy="22" r="7" fill="#fff" stroke="#a33" /><path d="M9 18v5h3" /></Icon></button>
          <button aria-label="打开的文档"><Icon size={17}>{quickIcons.open}</Icon></button>
        </RecentButtons>
        {item("new", "新建", true, { $on: true })}
        {item("open", "打开")}
        {item("save", "保存", false)}
        {item("saveAs", "另存为", false)}
        {item("export", "导出")}
        <MenuRule />
        {item("suite", "Suite 工作\n流", true, { $tall: true })}
        {item("publish", "发布")}
        {item("print", "打印")}
        <MenuRule />
        {item("close", "关闭", false)}
      </MenuLeft>
      <MenuRight>
        <NewPanel>
          <h2>创建一个 Revit 文件。</h2>
          <NewItems>
            {newItems.map(([icon, name, text]) => (
              <NewItem key={icon} $on={icon === "title"}>
                <Icon size={31} strokeWidth="1.6">{menuIcons[icon]}</Icon>
                <p><b>{name}</b>{text}</p>
              </NewItem>
            ))}
          </NewItems>
        </NewPanel>
        <MenuFooter><button>选项</button><button>退出 Revit</button></MenuFooter>
      </MenuRight>
    </AppMenu>
  );
}

function PropertiesPanel() {
  return (
    <Properties>
      <TypeSelector />
      <PropertyTable>
        <tbody>
          <tr><th>图纸发布日期</th><td>08/20/18</td></tr>
          <tr><th><label htmlFor="in-list">显示在图纸列表中</label></th><td><Tick id="in-list" type="checkbox" defaultChecked /></td></tr>
          <tr><th>图纸上的修订</th><td><RaisedButton>编辑...</RaisedButton></td></tr>
          <tr className="group"><th colSpan={2}><GroupRow>其他<Icon size={12} stroke="#222" strokeWidth="4"><path d="M8 14l8-8 8 8M8 26l8-8 8 8" /></Icon></GroupRow></th></tr>
          <tr className="muted"><th>文件路径</th><td /></tr>
          <tr><th>导向轴网</th><td>&lt;无&gt;</td></tr>
        </tbody>
      </PropertyTable>
      <PropertiesFooter><a href="#help">属性帮助</a><RaisedButton $width={73} disabled>应用</RaisedButton></PropertiesFooter>
    </Properties>
  );
}

function DrawingView() {
  return (
    <View>
      <Canvas>
        <Sheet>
          <SheetFrame>
            <TitleBlock>
              <LogoCell>
                <LogoPlate>
                  <svg width="45" height="46" viewBox="0 0 45 46">
                    <path d="M0 33l8 13 20-12z" fill="#6fb7ae" /><path d="M0 33l8 13 3-13z" fill="#3f8a83" /><path d="M13 0L0 29v4h11L24 8z" fill="#8db63c" /><path d="M13 0h13L17 19 8 12z" fill="#4b7f34" /><path d="M13 0h14l18 46H33z" fill="#3a93d6" /><path d="M23 25l13-2 9 23H33z" fill="#2d55a5" />
                  </svg>
                  AUTODESK<small>.</small>
                </LogoPlate>
                <LogoLink>www.autodesk.com/revit</LogoLink>
              </LogoCell>
              <RevisionTable>
                <colgroup><col width="25" /><col width="133" /><col width="40" /></colgroup>
                <thead><tr><th height="15">编号</th><th>说明</th><th>日期</th></tr></thead>
                <tbody>{[0, 1, 2, 3, 4, 5, 6, 7].map(n => <tr key={n}><td /><td /><td /></tr>)}</tbody>
              </RevisionTable>
              <InfoCell>
                <OwnerCell><span>所有者</span><span>项目名称</span></OwnerCell>
                <SheetInfo>
                  <SheetName>未命名</SheetName>
                  <SheetMeta>
                    <MetaList>
                      <div><dt>项目编号</dt><dd>项目编号</dd></div>
                      <div><dt>日期</dt><dd>出图日期</dd></div>
                      <div><dt>绘图员</dt><dd>作者</dd></div>
                      <div><dt>校对</dt><dd>审图员</dd></div>
                    </MetaList>
                    <SheetNumber>J0-11</SheetNumber>
                    <ScaleCell>比例</ScaleCell>
                  </SheetMeta>
                </SheetInfo>
              </InfoCell>
            </TitleBlock>
          </SheetFrame>
          <PlotStamp>2018/8/19 15:51:42</PlotStamp>
        </Sheet>
        <MdiButtons>
          <button aria-label="最小化"><Icon size={14}><path d="M3 20h26" stroke="#eee" strokeWidth="6" /></Icon></button>
          <button aria-label="还原"><Icon size={14}><path d="M11 4h16v18H11zM5 10h15v17H5z" stroke="#eee" strokeWidth="3" /></Icon></button>
          <button aria-label="关闭"><Icon size={14}><path d="M7 6l18 20M25 6L7 26" stroke="#eee" strokeWidth="7" /></Icon></button>
        </MdiButtons>
        <NavBar>
          <NavMark>×</NavMark>
          <NavIcon aria-label="控制盘"><Icon size={26}><path d="M3 12Q6 2 16 2h13v28h-8Q2 30 3 12z" fill="#8a8f94" stroke="#777" /><circle cx="16" cy="14" r="7" fill="#9a9fa4" stroke="#555" /></Icon><small>2D</small></NavIcon>
          <NavIcon aria-label="缩放"><Icon size={20}><path d="M4 4h18v17H4z" fill="#5d8246" stroke="#4b7036" /><circle cx="23" cy="22" r="5" fill="#a5aaad" stroke="#777" /></Icon></NavIcon>
          <NavMark $tall>◦</NavMark>
        </NavBar>
      </Canvas>
      <ScrollV><Caret $dir="up" $size={3} /><Thumb /><Caret $size={3} /></ScrollV>
      <ScrollH>
        <ViewControls>
          <Icon size={17}><path d="M1 10q6 0 7 9c7-1 6 6 13 4 8-3 8-15 1-14-4 1-3 8 0 8M11 10q3 6 8 6" /></Icon>
          <Icon size={12}><circle cx="16" cy="12" r="8" fill="#e2f0ff" stroke="#2f7fd5" strokeWidth="4" /><path d="M13 22v7h6v-7" /></Icon>
          <Caret $dir="left" $size={3} />
        </ViewControls>
        <Thumb /><Caret $dir="right" $size={3} />
      </ScrollH>
      <Icon size={16} stroke="#bbb" strokeWidth="3" strokeDasharray="3 4"><path d="M26 6v24M19 13v17M12 20v10" /></Icon>
    </View>
  );
}

function ProjectBrowser() {
  return (
    <Browser>
      <BrowserTitle>项目浏览器 - 项目1<button aria-label="关闭"><Icon size={9} stroke="#111" strokeWidth="6"><path d="M4 4l24 24M28 4L4 28" /></Icon></button></BrowserTitle>
      <Tree>
        <TreeRows>
          {tree.map((row, i) => (
            <TreeRow key={row.text} $child={row.child} $first={i === 0} $last={i === tree.length - 1}>
              <Expander $child={row.child} $empty={row.empty} aria-label={row.text}>
                <svg width="5" height="5" stroke="#3b5fa8"><path d={row.open ? "M0 2.5h5" : "M0 2.5h5M2.5 0v5"} /></svg>
              </Expander>
              {row.icon && <Icon size={16}>{treeIcons[row.icon]}</Icon>}
              <TreeLabel $on={row.on} $child={row.child}>{row.text}</TreeLabel>
            </TreeRow>
          ))}
        </TreeRows>
      </Tree>
    </Browser>
  );
}

const cursor = <path d="M16 12v17l4-4 3 6 3-1-3-6h6z" fill="#fff" stroke="#333" strokeWidth="1.6" />;

function Status() {
  return (
    <StatusBar>
      <StatusText>单击可进行选择; 按 Tab 键并单击可选择其他项目; 按 Ctrl 键并单击可将新项目添加到选择集; 按 Shift 键并单击可取消选择。</StatusText>
      <StatusTools>
        <Icon size={17}><path d="M2 14h11v16H2z" fill="#4aa3e0" stroke="#1c6ca8" /><path d="M9 12V4h13v6" stroke="#3c9a2c" strokeWidth="4" /><path d="M18 14v16M22 14v16M18 12q2-4 4 0M27 10v20" /></Icon>
        <PickWrap $width={204} $muted><Pick $plain aria-label="工作集" defaultValue=""><option value="" /></Pick><Caret $size={4} /></PickWrap>
        <Icon size={16} stroke="#aaa"><path d="M10 3h18v9H16l-5 8H6M2 30h14" /></Icon>
        <FilterCount>:0</FilterCount>
        <Icon size={18}><path d="M2 3h28v26H2z" fill="#eee" /><path d="M2 6h28" strokeWidth="6" /><path d="M8 15h5M16 15h10M8 23h5M16 23h10" /></Icon>
        <Icon size={16}><path d="M2 2h28v28H2z" fill="#a8a8a8" stroke="none" /><path d="M2 18h14M11 11l8 7-8 8" stroke="#fff" strokeWidth="4" /></Icon>
        <PickWrap $width={155} $muted><Pick $plain aria-label="设计选项"><option>主模型</option></Pick><Caret $size={4} /></PickWrap>
      </StatusTools>
      <SelectTools>
        <Icon size={17}><g transform="translate(0 -4)">{treeIcons.link}</g>{cursor}</Icon>
        <Icon size={17}><path d="M2 20L14 4M2 20h16M4 27h12" stroke="#1f75c8" /><path d="M18 2l12 12M30 2L18 14" stroke="#d33" strokeWidth="4" />{cursor}</Icon>
        <Icon size={17}><path d="M3 12h12v14H3zM10 4h12" stroke="#d6681c" />{cursor}</Icon>
        <Icon size={17}><path d="M3 6h14v20H3z" fill="#bfe0fa" stroke="#2f86cf" />{cursor}</Icon>
        <Icon size={17}><path d="M6 3v10M1 8h10" />{cursor}</Icon>
        <Icon size={17}><path d="M2 5h28L19 18v12l-6-4v-8z" fill="#eee" /></Icon>
        <span>:0</span>
      </SelectTools>
    </StatusBar>
  );
}

function TemplateDialog() {
  return (
    <Dialog role="dialog" aria-label="新族 - 选择样板文件">
      <DialogTitle>
        <svg width="15" height="15" viewBox="0 0 15 15"><path d="M0 0h15v15H0z" fill="#a8c8f0" /><path d="M4 2l5-1 2 3-2 4 4 5H9L7 9l-2 4H2z" fill="#0d2a6b" /></svg>
        <strong><span>新族 - 选择样板文件</span></strong>
        <DialogButtons><DialogButton aria-label="帮助">?</DialogButton><DialogButton $close aria-label="关闭">X</DialogButton></DialogButtons>
      </DialogTitle>
      <DialogBody>
        <LookLabel htmlFor="look-in">查找范围(I):</LookLabel>
        <FolderPick>
          <Icon size={15}>{folder}</Icon>
          <PickWrap><Pick id="look-in" $height={21} $inset={18}><option>标题栏</option></Pick><Caret $size={4} /></PickWrap>
        </FolderPick>
        <DialogTools>
          <button aria-label="后退"><Icon size={16}><path d="M1 16L14 5v6h17v10H14v6z" fill="#6f8fe8" stroke="#4a5fc4" /></Icon></button>
          <button aria-label="向上一级"><Icon size={16}><path d="M2 2h12l3 3h11v19H2z" fill="#eeb45e" stroke="#c8832b" /><path d="M18 28h9v-9M23 22l4-4 4 4" stroke="#3c5fc8" strokeWidth="3" /></Icon></button>
          <button aria-label="删除"><Icon size={16}><path d="M6 5l20 22M26 5L6 27" stroke="#8c8c8c" strokeWidth="6" /></Icon></button>
          <button aria-label="新建文件夹"><Icon size={16}><path d="M2 2h12l3 3h11v19H2z" fill="#eeb45e" stroke="#c8832b" /><path d="M26 18v13M20 25h12" stroke="#3c5fc8" strokeWidth="3" /></Icon></button>
          <button>查看 (V)<Caret $size={4} /></button>
        </DialogTools>
        <Places>
          <PlaceList>
            {places.map(([name, art], i) => <Place key={i} aria-label={name || "桌面"}><Icon size={28} strokeWidth="1.4">{art}</Icon>{name}</Place>)}
          </PlaceList>
          <PlaceScroll><Caret $dir="up" $size={3} /><Caret $size={3} /></PlaceScroll>
        </Places>
        <FilePane>
          <FileTable>
            <thead><tr><th>名称<Caret $dir="up" $size={3} /></th><th>类型</th><th /></tr></thead>
            <tbody>
              {files.map(name => <tr key={name}><td><FileName><RftIcon />{name}</FileName></td><td>Revit Family Templ...</td><td /></tr>)}
            </tbody>
          </FileTable>
          <FileFill><i /><i /></FileFill>
          <FieldRow $first><label htmlFor="file-name">文件名(N):</label><PickWrap><NameInput id="file-name" type="text" /><Caret $size={4} /></PickWrap></FieldRow>
          <FieldRow><label htmlFor="file-type">文件类型(T):</label><PickWrap><Pick id="file-type" $height={18}><option>族样板文件 (*.rft)</option></Pick><Caret $size={4} /></PickWrap></FieldRow>
        </FilePane>
        <Preview><legend>预览</legend></Preview>
        <DialogFooter>
          <RaisedButton $width={79}>工具(L)<ToolsGap /><Caret $size={4} /></RaisedButton>
          <RaisedButton $width={86}>打开(O)</RaisedButton><RaisedButton $width={86}>取消(C)</RaisedButton>
        </DialogFooter>
      </DialogBody>
    </Dialog>
  );
}

function Annotations() {
  return (
    <>
      <Highlight $x={0} $y={56} $w={142} $h={77} />
      <Highlight $x={126} $y={227} $w={301} $h={77} />
      <Arrows width="740" height="560" fill="none" strokeWidth="6">
        <path d="M140 95H277V228" stroke="#222" strokeDasharray="24 18" />
        <path d="M266 206l11 20 11-20" stroke="#222" strokeLinecap="round" strokeWidth="5" />
        <path d="M268 209l9 4 9-4-9 21z" fill="#222" />
        <path d="M427 266H577V527H726" stroke="#ff0" strokeDasharray="24 18" strokeDashoffset="2" />
        <path d="M705 515l20 12-20 12" stroke="#ff0" strokeLinecap="round" />
      </Arrows>
      <Callout>
        <svg width="377" height="107" fill="none"><path d="M3 3H374V104H3z" stroke="#ff6600" strokeWidth="6" strokeDasharray="24 18" strokeDashoffset="16" /></svg>
        通过新建方式创建<br />所需标题栏族
      </Callout>
    </>
  );
}

export default function App() {
  return (
    <>
      <GlobalStyle />
      <Shell>
        <TitleRow />
        <AppButton aria-label="应用程序菜单"><RevitMark width={25} height={34} /><Caret $size={3} /></AppButton>
        <Tabs>
          {["视图", "管理", "附加模块", "Fuzor Plugin", "修改"].map(name => <Tab key={name}>{name}</Tab>)}
          <TabToggle aria-label="最小化功能区">
            <svg width="15" height="11"><rect x=".5" y=".5" width="14" height="10" rx="3" fill="#eee" stroke="#444" /><path d="M5 7l3-3 3 3z" fill="#222" /></svg>
            <Caret $size={3} />
          </TabToggle>
        </Tabs>
        <Ribbon>
          {panels.map(panel => (
            <RibbonPanel key={panel.label}>
              <RibbonButtons>
                {panel.buttons.map(([icon, text, width, arrow, on]) => (
                  <RibbonButton key={icon} $width={width} $on={on}>
                    <Icon size={32} stroke={on ? "#444" : "#b4b4b4"} strokeWidth="1.4">{ribbonIcons[icon]}</Icon>
                    {text}{arrow && <ButtonArrow $side={arrow === "side"} />}
                  </RibbonButton>
                ))}
              </RibbonButtons>
              <PanelLabel>{panel.label}{panel.more && <Caret $size={4} />}</PanelLabel>
            </RibbonPanel>
          ))}
        </Ribbon>
        <OptionsBar />
        <Workspace>
          <PropertiesPanel />
          <DrawingView />
          <ProjectBrowser />
        </Workspace>
        <Status />
        <Menu />
        <TemplateDialog />
        <Annotations />
        <Watermark>www.eeeetop.com</Watermark>
      </Shell>
    </>
  );
}
